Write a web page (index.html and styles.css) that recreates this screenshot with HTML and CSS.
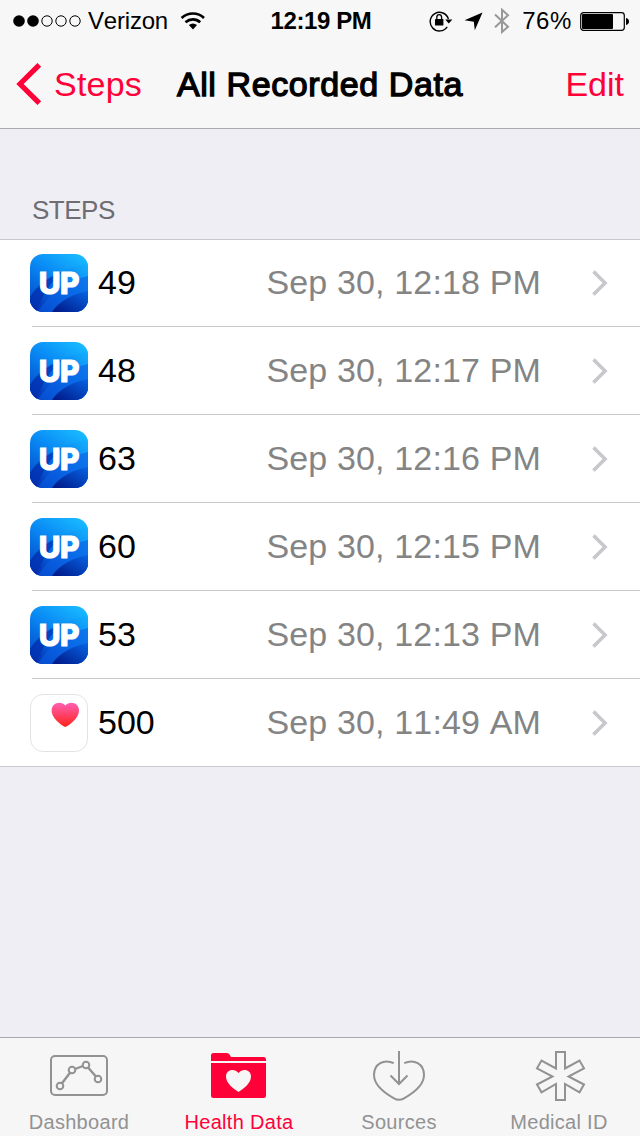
FILE: index.html
```html
<!DOCTYPE html>
<html lang="en">
<head>
  <meta charset="UTF-8">
  <title>All Recorded Data</title>
  <meta name="viewport" content="width=device-width, initial-scale=1.0">
  <link rel="stylesheet" href="styles.css">
</head>
<body>

  <!-- shared shapes -->
  <svg class="defs" width="0" height="0">
    <defs>
      <linearGradient id="sky" x1="0.8" y1="0" x2="0.2" y2="1">
        <stop offset="0" stop-color="#18b8ff"/>
        <stop offset="0.4" stop-color="#0a8cf5"/>
        <stop offset="1" stop-color="#0348c8"/>
      </linearGradient>
      <linearGradient id="wave" x1="1" y1="0" x2="0" y2="1">
        <stop offset="0" stop-color="#14b4ff"/>
        <stop offset="0.5" stop-color="#0870ea"/>
        <stop offset="1" stop-color="#0226a4"/>
      </linearGradient>
      <linearGradient id="deep" x1="1" y1="0" x2="0" y2="1">
        <stop offset="0" stop-color="#0764e4"/>
        <stop offset="1" stop-color="#001684"/>
      </linearGradient>
      <linearGradient id="pink" x1="0" y1="0" x2="0" y2="1">
        <stop offset="0" stop-color="#ff5fb4"/>
        <stop offset="1" stop-color="#ff2418"/>
      </linearGradient>
      <clipPath id="tile"><rect width="58" height="58" rx="13"/></clipPath>
    </defs>
    <symbol id="waves" viewBox="0 0 58 58">
      <g clip-path="url(#tile)">
        <rect width="58" height="58" fill="url(#sky)"/>
        <path d="M58 9C35 14 13 25 0 43V58H58z" fill="url(#wave)"/>
        <path d="M0 43C7 31 20 22 33 17C21 28 11 42 7 58H0z" fill="#0231b0" opacity="0.7"/>
        <path d="M58 22C34 28 18 40 8 58H58z" fill="#0a5fe4" opacity="0.6"/>
        <path d="M58 37C43 40 29 47 22 58H58z" fill="url(#deep)"/>
      </g>
    </symbol>
    <symbol id="chevron" viewBox="0 0 16 26">
      <path d="M1.5 1.5L13 13L1.5 24.5" fill="none" stroke="#c7c7cc" stroke-width="3.6"/>
    </symbol>
  </svg>

  <header class="top">
    <div class="status">
      <div class="status-left">
        <svg width="68" height="14" viewBox="0 0 68 14">
          <circle cx="6" cy="7" r="5.8"/>
          <circle cx="20" cy="7" r="5.8"/>
          <g fill="none" stroke="#000" stroke-width="1">
            <circle cx="34" cy="7" r="5.2"/>
            <circle cx="48" cy="7" r="5.2"/>
            <circle cx="62" cy="7" r="5.2"/>
          </g>
        </svg>
        <span class="carrier">Verizon</span>
        <svg width="26" height="20" viewBox="0 0 26 20">
          <g fill="none" stroke="#000" stroke-width="2.7">
            <path d="M1.6 7C8 1 18 1 24 7"/>
            <path d="M5.5 11.3C9.8 7.5 16 7.5 20.200 11.3"/>
          </g>
          <path d="M8.8 14Q13 11 17 14L13 18.5z"/>
        </svg>
      </div>
      <div class="time">12:19 PM</div>
      <div class="status-right">
        <svg width="24" height="22" viewBox="0 0 24 22">
          <path d="M18.2 16.8A9.3 9.3 0 1 1 19.4 9" fill="none" stroke="#000" stroke-width="1.4"/>
          <path d="M16.2 9.4H23.4L19.8 13.6z"/>
          <rect x="6" y="9" width="8.4" height="6.6" rx="0.6"/>
          <path d="M7.8 9.5V7.5a2.4 2.8 0 0 1 4.8 0V9.5" fill="none" stroke="#000" stroke-width="1.3"/>
        </svg>
        <svg class="location" width="19" height="19" viewBox="0 0 19 19">
          <path d="M18.5 .5L10.8 18.3L9.8 9.7L.5 8.2z"/>
        </svg>
        <svg class="bluetooth" width="16" height="28" viewBox="0 0 16 28">
          <path d="M1 7.5L14 19.8L8 25V2.8L14 8.2L1 20.2" fill="none" stroke="#989898" stroke-width="2"/>
        </svg>
        <span class="percent">76%</span>
        <svg width="49" height="19" viewBox="0 0 49 19">
          <rect x="0.7" y="0.7" width="43.6" height="17.6" rx="2.8" fill="none" stroke="#000" stroke-width="1.2"/>
          <rect x="2" y="2" width="31" height="15" rx="1"/>
          <path d="M46 6Q49 6.8 49 9.5Q49 12.2 46 13z"/>
        </svg>
      </div>
    </div>

    <nav class="nav">
      <a class="back">
        <svg width="26" height="42" viewBox="0 0 26 42">
          <path d="M23.3 1.8L4 21L23.3 40.2" fill="none" stroke="#ff0039" stroke-width="5.2"/>
        </svg>
        <span>Steps</span>
      </a>
      <h1>All Recorded Data</h1>
      <a class="edit">Edit</a>
    </nav>
  </header>

  <main>
    <h2>STEPS</h2>
    <ul class="list">
      <li>
        <div class="app"><svg><use href="#waves"/></svg><b>UP</b></div>
        <div class="row"><span class="count">49</span><span class="date">Sep 30, 12:18 PM</span><svg class="arrow"><use href="#chevron"/></svg></div>
      </li>
      <li>
        <div class="app"><svg><use href="#waves"/></svg><b>UP</b></div>
        <div class="row"><span class="count">48</span><span class="date">Sep 30, 12:17 PM</span><svg class="arrow"><use href="#chevron"/></svg></div>
      </li>
      <li>
        <div class="app"><svg><use href="#waves"/></svg><b>UP</b></div>
        <div class="row"><span class="count">63</span><span class="date">Sep 30, 12:16 PM</span><svg class="arrow"><use href="#chevron"/></svg></div>
      </li>
      <li>
        <div class="app"><svg><use href="#waves"/></svg><b>UP</b></div>
        <div class="row"><span class="count">60</span><span class="date">Sep 30, 12:15 PM</span><svg class="arrow"><use href="#chevron"/></svg></div>
      </li>
      <li>
        <div class="app"><svg><use href="#waves"/></svg><b>UP</b></div>
        <div class="row"><span class="count">53</span><span class="date">Sep 30, 12:13 PM</span><svg class="arrow"><use href="#chevron"/></svg></div>
      </li>
      <li>
        <div class="app">
          <svg viewBox="0 0 58 58">
            <rect x="0.5" y="0.5" width="57" height="57" rx="12.5" fill="#fff" stroke="#e3e3e3"/>
            <path d="M35.3 33C30 30.4 21.6 23.6 21.6 16.4C21.6 8.6 31 6.4 35.3 11.4C39.6 6.4 49 8.6 49 16.4C49 23.6 40.6 30.4 35.3 33z" fill="url(#pink)"/>
          </svg>
        </div>
        <div class="row"><span class="count">500</span><span class="date">Sep 30, 11:49 AM</span><svg class="arrow"><use href="#chevron"/></svg></div>
      </li>
    </ul>
  </main>

  <footer class="tabs">
    <a class="tab">
      <svg width="60" height="54" viewBox="0 0 60 54" fill="none" stroke="#929292" stroke-width="2">
        <rect x="2" y="6" width="56" height="39" rx="4"/>
        <path d="M13 33.300L21 22.700M26 19L34 16M39.300 17.700L46.700 26.300" stroke-width="2.4"/>
        <circle cx="11" cy="36" r="3.3"/>
        <circle cx="23" cy="20" r="3.3"/>
        <circle cx="37" cy="15" r="3.3"/>
        <circle cx="49" cy="29" r="3.3"/>
      </svg>
      <span>Dashboard</span>
    </a>
    <a class="tab active">
      <svg width="60" height="54" viewBox="0 0 60 54" fill="#ff0039">
        <path d="M2 11V5.500Q2 3 4.500 3H18Q19.500 3 20.500 4.500L22 7H54.500Q57 7 57 9.500V11z"/>
        <path d="M2 13H57V45.500Q57 48 54.500 48H4.500Q2 48 2 45.500z"/>
        <path d="M29.500 42C24 38.500 17 33 17 26.500C17 19.500 25.500 18 29.500 23C33.500 18 42 19.500 42 26.500C42 33 35 38.500 29.500 42z" fill="#f6f6f6"/>
      </svg>
      <span>Health Data</span>
    </a>
    <a class="tab">
      <svg width="60" height="54" viewBox="0 0 60 54" fill="none" stroke="#929292" stroke-width="2">
        <path d="M24.8 13.2C15 8.5 5 14 5 25C5 34.5 15.5 43 25 48.3C28.5 50.3 31.5 50.3 35 48.3C44.5 43 55 34.5 55 25C55 14 45 8.5 35.2 13.2"/>
        <path d="M30 1V33M21.5 25.5L30 34L38.5 25.5"/>
      </svg>
      <span>Sources</span>
    </a>
    <a class="tab">
      <svg width="60" height="54" viewBox="0 0 60 54" fill="none" stroke="#929292" stroke-width="2">
        <path d="M27 2H36V18.5L50.5 10.5L55 18.3L39.5 26.5L55 34.5L50.5 42.3L36 34V50H27V34L12.5 42.3L8 34.5L23.5 26.5L8 18.3L12.5 10.5L27 18.5z"/>
      </svg>
      <span>Medical ID</span>
    </a>
  </footer>

</body>
</html>
```
FILE: styles.css
```css
* {
  box-sizing: border-box;
}

body {
  margin: 0;
  height: 1136px;
  display: flex;
  flex-direction: column;
  background: #efeef4;
  font-family: "Liberation Sans", Arial, sans-serif;
  font-size: 34px;
  font-kerning: none;
  color: #000;
  overflow: hidden;
}

svg {
  display: block;
  flex: none;
}

.defs {
  position: absolute;
}

.top {
  height: 129px;
  background: #f7f7f7;
  border-bottom: 1px solid #a9a9ac;
}

.status {
  height: 40px;
  display: grid;
  grid-template-columns: 1fr auto 1fr;
  align-items: center;
  padding: 2px 11px 0 13px;
  font-size: 24px;
}

.status-left,
.status-right {
  display: flex;
  align-items: center;
}

.status-right {
  justify-content: flex-end;
}

.carrier {
  margin: 0 12px 0 7px;
  letter-spacing: -0.2px;
}

.time {
  font-weight: bold;
  letter-spacing: -0.4px;
}

.location {
  margin-left: 11px;
}

.bluetooth {
  margin-left: 11px;
}

.percent {
  margin: 0 8px 0 12px;
  letter-spacing: 0.6px;
}

.nav {
  height: 88px;
  display: grid;
  grid-template-columns: 1fr auto 1fr;
  align-items: center;
  padding: 0 16px;
}

.back {
  display: flex;
  align-items: center;
  gap: 12px;
  letter-spacing: 0.2px;
  color: #ff0039;
}

.edit {
  text-align: right;
  color: #ff0039;
}

/* medium weight: regular with a thin outline */
h1 {
  margin: 0;
  font-size: 34px;
  font-weight: normal;
  letter-spacing: 0.6px;
  -webkit-text-stroke: 1.3px #000;
}

main {
  flex: 1;
}

h2 {
  margin: 0;
  height: 110px;
  padding: 66px 32px 0;
  font-size: 26px;
  line-height: 30px;
  font-weight: normal;
  letter-spacing: -0.5px;
  color: #6d6d72;
}

.list {
  margin: 0;
  padding: 0;
  list-style: none;
  background: #fff;
  border-top: 1px solid #c8c7cc;
  border-bottom: 1px solid #c8c7cc;
}

.list li {
  height: 88px;
  display: flex;
  padding: 1px 0 0 30px;
  /* the divider starts 2px right of the icon edge */
  background: linear-gradient(#c8c7cc, #c8c7cc) 32px 100% / 100% 1px no-repeat;
}

.list li:first-child {
  height: 87px;
  padding-top: 0;
}

.list li:last-child {
  height: 87px;
  background: none;
}

.app {
  width: 58px;
  height: 58px;
  margin-top: 14px;
  display: grid;
}

.app svg,
.app b {
  grid-area: 1 / 1;
  width: 58px;
  height: 58px;
}

.app b {
  font: 800 30px/58px Inter, sans-serif;
  letter-spacing: -0.4px;
  text-align: center;
  color: #fff;
  -webkit-text-stroke: 1px #fff;
}

.row {
  flex: 1;
  height: 85px;
  display: flex;
  align-items: center;
  padding: 0 32px 0 10px;
}

.date {
  margin-left: auto;
  letter-spacing: 0.15px;
  color: #848484;
}

.arrow {
  width: 16px;
  height: 26px;
  margin-left: 51px;
}

.tabs {
  height: 99px;
  display: grid;
  grid-template-columns: repeat(4, 160px);
  margin-left: -1px;
  padding-left: 0;
  background: #f6f6f6;
  border-top: 1px solid #a8a8ac;
}

.tab {
  display: flex;
  flex-direction: column;
  align-items: center;
  padding-top: 12px;
  font-size: 20px;
  line-height: 24px;
  color: #929292;
  white-space: nowrap;
}

.tab span {
  margin-top: 6px;
  letter-spacing: 0.3px;
}

.tab.active {
  color: #ff0039;
}
```
